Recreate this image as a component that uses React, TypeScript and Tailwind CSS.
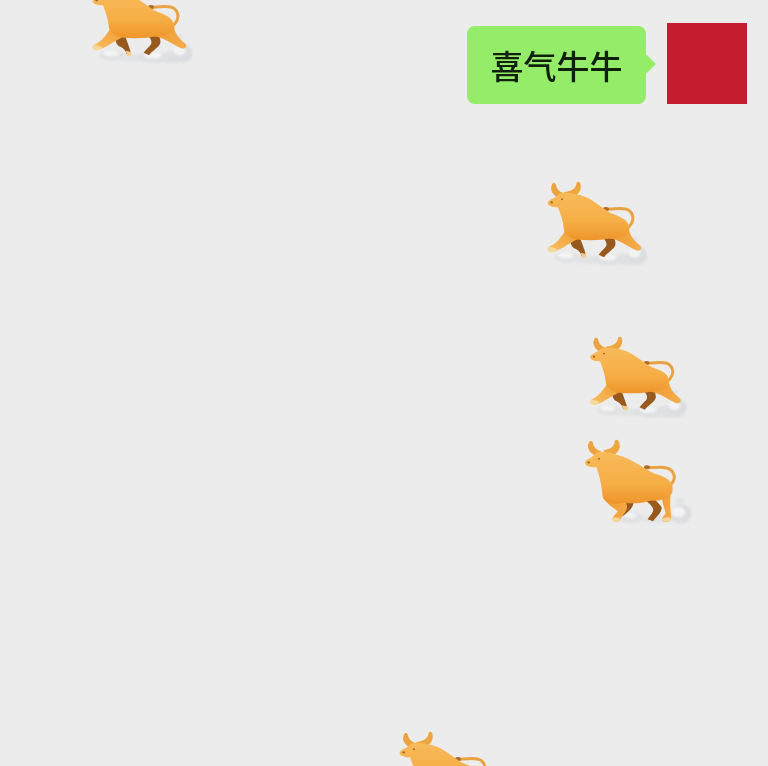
import React from "react";

function Defs({ id }: { id: string }) {
  return (
    <defs>
      <linearGradient id={`body-${id}`} x1="0" y1="0" x2="0" y2="1" gradientUnits="objectBoundingBox">
        <stop offset="0" stopColor="#f8ba5a" />
        <stop offset="0.6" stopColor="#f6ae46" />
        <stop offset="1" stopColor="#ee952a" />
      </linearGradient>
      <linearGradient id={`leg-${id}`} x1="1" y1="0" x2="0" y2="1">
        <stop offset="0" stopColor="#f09a2e" />
        <stop offset="1" stopColor="#f8c066" />
      </linearGradient>
      <linearGradient id={`hind-${id}`} x1="0" y1="0" x2="1" y2="1">
        <stop offset="0" stopColor="#f09a2e" />
        <stop offset="1" stopColor="#f4ad4d" />
      </linearGradient>
      <filter id={`soft-${id}`} x="-20%" y="-20%" width="140%" height="140%">
        <feGaussianBlur stdDeviation="3.5" />
      </filter>
    </defs>
  );
}

function RunningBull({ id, className }: { id: string; className: string }) {
  return (
    <svg viewBox="0 0 390 330" className={className}>
      <Defs id={id} />
      <g filter={`url(#soft-${id})`}>
        <ellipse cx="112" cy="262" rx="38" ry="17" fill="#e0e1e3" />
        <ellipse cx="108" cy="256" rx="24" ry="9" fill="#f4f4f5" />
        <ellipse cx="172" cy="270" rx="44" ry="12" fill="#e2e3e5" />
        <ellipse cx="240" cy="268" rx="50" ry="17" fill="#dfe0e2" />
        <ellipse cx="236" cy="262" rx="30" ry="9" fill="#f4f4f5" />
        <ellipse cx="292" cy="268" rx="36" ry="18" fill="#dfe0e2" />
        <ellipse cx="324" cy="256" rx="28" ry="28" fill="#dcdde0" />
        <ellipse cx="314" cy="248" rx="18" ry="15" fill="#f3f3f4" />
        <ellipse cx="314" cy="208" rx="11" ry="9" fill="#e2e3e4" />
      </g>
      <path d="M120 200 C122 222 124 232 136 236 C146 240 152 248 156 260 L168 256 C164 240 158 224 150 204 Z" fill="#97591d" />
      <path d="M216 198 C228 214 234 222 226 232 C218 240 212 246 206 254 L222 262 C232 248 250 240 256 226 C258 212 252 204 246 196 Z" fill="#97591d" />
      <path d="M152 248 L168 252 L170 262 L158 264 Z" fill="#f3d08e" />
      <path d="M226 117 C252 120 280 108 298 122 C316 138 310 160 290 176" fill="none" stroke="#eaa344" strokeWidth="9" strokeLinecap="round" />
      <ellipse cx="228" cy="117" rx="9" ry="6" fill="#ad6c28" />
      <path d="M90 84 C68 78 56 58 68 40 C74 36 78 42 78 46 C80 58 88 66 102 70 Z" fill="#eda440" />
      <path d="M108 86 C138 86 160 62 150 38 C146 33 139 36 139 42 C137 56 124 64 102 66 Z" fill="#eea73f" />
      <path d="M112 170 C100 195 80 220 58 230 C50 236 54 248 68 246 C90 242 120 218 142 208 Z" fill={`url(#leg-${id})`} />
      <path d="M296 170 C298 195 310 210 332 228 C338 240 326 246 312 238 C292 228 272 212 240 205 Z" fill={`url(#hind-${id})`} />
      <path d="M53 97 C58 88 72 86 88 72 C106 64 128 72 152 76 C184 84 210 110 240 128 C268 140 296 146 298 176 C298 195 270 205 246 205 C210 212 170 212 135 208 C115 202 104 190 102 180 C100 155 92 132 84 112 C68 112 52 108 53 97 Z" fill={`url(#body-${id})`} />
      <path d="M56 231 C48 236 52 248 66 247 C74 246 80 243 82 238 C76 234 64 230 56 231 Z" fill="#f7d89b" />
      <circle cx="96" cy="88" r="3" fill="#a96a24" />
      <circle cx="65" cy="97" r="3.5" fill="#a8662a" />
    </svg>
  );
}

function StandingBull({ id, className }: { id: string; className: string }) {
  return (
    <svg viewBox="0 0 390 300" className={className}>
      <Defs id={id} />
      <g filter={`url(#soft-${id})`}>
        <ellipse cx="168" cy="262" rx="34" ry="18" fill="#dfe0e2" />
        <ellipse cx="165" cy="256" rx="20" ry="9" fill="#f3f3f4" />
        <ellipse cx="250" cy="268" rx="50" ry="12" fill="#e2e3e5" />
        <ellipse cx="318" cy="252" rx="32" ry="29" fill="#dcdde0" />
        <ellipse cx="310" cy="246" rx="20" ry="16" fill="#f3f3f4" />
        <ellipse cx="315" cy="214" rx="14" ry="12" fill="#e2e3e4" />
      </g>
      <path d="M136 212 C150 228 144 240 130 250 L144 258 C158 246 172 238 176 218 Z" fill="#97591d" />
      <path d="M204 206 C224 220 238 232 234 244 C230 254 224 258 218 268 L234 274 C244 260 260 250 260 232 C252 220 242 212 232 202 Z" fill="#97591d" />
      <path d="M214 112 C240 116 272 104 290 122 C306 140 296 162 272 176" fill="none" stroke="#eaa344" strokeWidth="9" strokeLinecap="round" />
      <ellipse cx="216" cy="112" rx="9" ry="6" fill="#ad6c28" />
      <path d="M64 78 C42 70 32 50 44 34 C50 30 54 36 54 40 C56 52 64 60 78 64 Z" fill="#eda440" />
      <path d="M92 80 C122 80 144 58 130 32 C126 27 119 30 119 36 C117 50 106 58 86 60 Z" fill="#eea73f" />
      <path d="M84 195 C88 220 115 232 128 244 C124 252 114 258 112 268 C116 280 130 278 136 268 C140 258 150 250 154 240 C158 230 156 222 150 214 Z" fill={`url(#hind-${id})`} />
      <path d="M262 190 C258 215 270 235 272 250 C268 258 262 262 262 270 C268 280 282 276 288 266 C290 252 282 230 288 190 Z" fill={`url(#hind-${id})`} />
      <path d="M30 95 C36 86 50 84 64 68 C84 60 114 70 144 80 C180 92 216 124 254 136 C280 144 298 160 292 186 C286 205 250 215 226 212 C200 220 170 222 150 218 C120 225 95 222 84 205 C80 176 76 140 64 112 C46 112 28 108 30 95 Z" fill={`url(#body-${id})`} />
      <path d="M112 266 C114 278 128 278 135 268 C134 262 118 260 112 266 Z" fill="#f7d89b" />
      <path d="M262 268 C266 279 282 276 287 266 C284 260 268 260 262 268 Z" fill="#f7d89b" />
      <circle cx="72" cy="86" r="3" fill="#a96a24" />
      <circle cx="41" cy="97" r="3.5" fill="#a8662a" />
    </svg>
  );
}

export default function App() {
  return (
    <div className="relative h-[766px] w-[768px] overflow-hidden bg-[#ececec]">
      <div className="flex items-start justify-end gap-[21px] pr-[21px] pt-[23px]">
        <div className="relative mt-[3px] flex h-[78px] w-[179px] items-center justify-center rounded-lg bg-[#95ec69] blur-[0.5px]">
          <span className="text-[33px] font-medium leading-none text-[#10200c] [font-family:'Noto_Sans_CJK_SC','Noto_Sans',sans-serif]">喜气牛牛</span>
          <div className="absolute right-[-7px] top-[31px] size-[14px] rotate-45 rounded-[1px] bg-[#95ec69]" />
        </div>
        <div className="h-[81px] w-[80px] bg-[#c51d30]" />
      </div>
      <RunningBull id="a" className="absolute left-[75px] top-[-32px] h-[110px] w-[130px] blur-[0.7px]" />
      <RunningBull id="b" className="absolute left-[530px] top-[170px] h-[110px] w-[130px] blur-[0.7px]" />
      <RunningBull id="c" className="absolute left-[573px] top-[325px] h-[107px] w-[126px] blur-[0.7px]" />
      <StandingBull id="d" className="absolute left-[575px] top-[430px] h-[100px] w-[130px] blur-[0.7px]" />
      <RunningBull id="e" className="absolute left-[382px] top-[720px] h-[110px] w-[130px] blur-[0.7px]" />
    </div>
  );
}
